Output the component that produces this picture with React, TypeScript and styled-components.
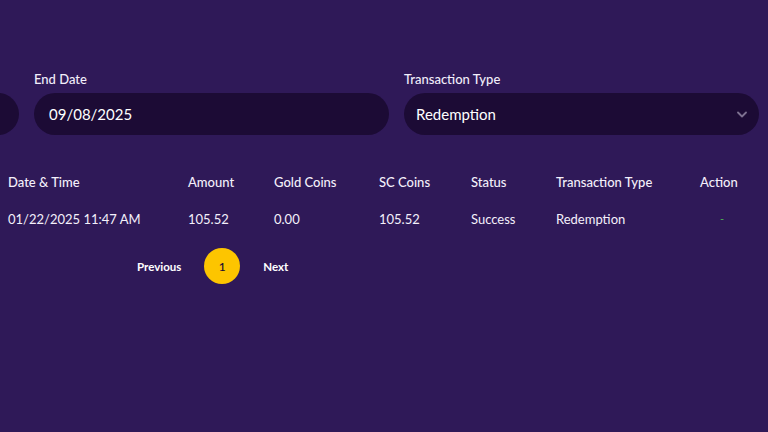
import styled, { createGlobalStyle } from "styled-components";

const GlobalStyle = createGlobalStyle`
  body {
    margin: 0;
    background: #2f1958;
    font-family: Lato, "Open Sans", sans-serif;
    color: #ffffff;
    overflow: hidden;
  }
`;

const Page = styled.div`
  width: 768px;
  height: 432px;
  padding-top: 71px;
  box-sizing: border-box;
  overflow: hidden;
`;

const Filters = styled.div`
  display: grid;
  grid-template-columns: repeat(3, 355px);
  column-gap: 15px;
  margin-left: -336px;
`;

const Field = styled.div`
  display: flex;
  flex-direction: column;
  gap: 6px;
`;

const Label = styled.label`
  font-size: 13px;
  line-height: 16px;
  font-weight: 500;
  color: #f2eefa;
`;

const InputBox = styled.div<{ $select?: boolean }>`
  height: 42px;
  border-radius: 21px;
  background: #1c0b35;
  display: flex;
  align-items: center;
  justify-content: space-between;
  padding: ${(p) => (p.$select ? "0 12px 0 12px" : "0 15px")};
  font-size: 15px;
  color: #ffffff;
  box-sizing: border-box;
`;

const Table = styled.div`
  margin-top: 28px;
  display: flex;
  flex-direction: column;
`;

const Row = styled.div<{ $head?: boolean }>`
  display: grid;
  grid-template-columns: 180px 86px 105px 92px 85px 144px 60px;
  height: 37px;
  align-items: center;
  padding-left: 8px;
  font-size: 13px;
  font-weight: ${(p) => (p.$head ? 500 : 400)};
  color: #f4f0fb;
`;

const ActionCell = styled.span`
  color: #4caf50;
  font-size: 11px;
  padding-left: 20px;
`;

const Pager = styled.div`
  display: flex;
  align-items: center;
  margin-top: 11px;
  padding-left: 137px;
  font-size: 11.5px;
  font-weight: 700;
  color: #ffffff;
`;

const PageLink = styled.span`
  cursor: pointer;
`;

const PageNum = styled.span`
  width: 36px;
  height: 36px;
  border-radius: 50%;
  background: #fdc500;
  color: #1c0b35;
  font-weight: 500;
  font-size: 12px;
  display: flex;
  align-items: center;
  justify-content: center;
  margin: 0 23px 0 23px;
`;

const Chevron = () => (
  <svg width="10" height="7" viewBox="0 0 10 7" fill="none">
    <path d="M1 1.5L5 5.5L9 1.5" stroke="#7d7190" strokeWidth="1.8" strokeLinecap="round" strokeLinejoin="round" />
  </svg>
);

const columns = ["Date & Time", "Amount", "Gold Coins", "SC Coins", "Status", "Transaction Type", "Action"];

export default function App() {
  return (
    <Page>
      <GlobalStyle />
      <Filters>
        <Field>
          <Label>Start Date</Label>
          <InputBox>01/01/2025</InputBox>
        </Field>
        <Field>
          <Label>End Date</Label>
          <InputBox>09/08/2025</InputBox>
        </Field>
        <Field>
          <Label>Transaction Type</Label>
          <InputBox $select>
            Redemption
            <Chevron />
          </InputBox>
        </Field>
      </Filters>
      <Table>
        <Row $head>
          {columns.map((c) => (
            <span key={c}>{c}</span>
          ))}
        </Row>
        <Row>
          <span>01/22/2025 11:47 AM</span>
          <span>105.52</span>
          <span>0.00</span>
          <span>105.52</span>
          <span>Success</span>
          <span>Redemption</span>
          <ActionCell>-</ActionCell>
        </Row>
      </Table>
      <Pager>
        <PageLink>Previous</PageLink>
        <PageNum>1</PageNum>
        <PageLink>Next</PageLink>
      </Pager>
    </Page>
  );
}
